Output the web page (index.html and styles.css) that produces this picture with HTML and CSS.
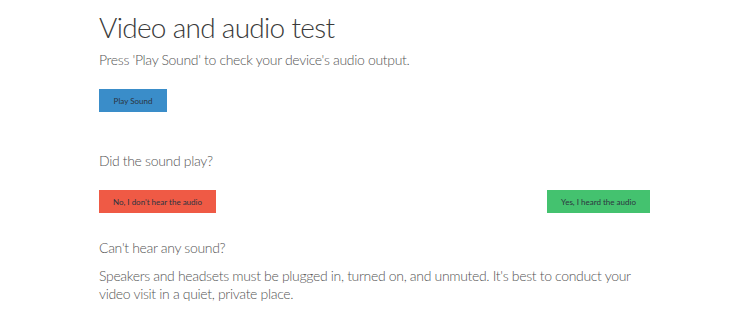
FILE: index.html
```html
<!DOCTYPE html>
<html>

<head>
    <title>Video and audio test</title>
    <meta charset="utf-8">
    <meta name="viewport" content="width=device-width, initial-scale=1.0">
    <link rel="stylesheet" href="styles.css">
</head>

<body>
    <main class="test">
        <h1>Video and audio test</h1>
        <p class="intro">Press 'Play Sound' to check your device's audio output.</p>

        <button class="knap play">Play Sound</button>

        <p class="sporg">Did the sound play?</p>
        <div class="svar">
            <button class="knap nej">No, I don't hear the audio</button>
            <button class="knap ja">Yes, I heard the audio</button>
        </div>

        <p class="hjaelp">Can't hear any sound?</p>
        <p class="tekst">Speakers and headsets must be plugged in, turned on, and unmuted. It's best to conduct your video visit in a quiet, private place.</p>
    </main>
</body>

</html>
```

FILE: styles.css
```css
body {
    margin: 0;
    font-family: Lato, "Open Sans", sans-serif;
    font-weight: 300;
    color: #555;
    letter-spacing: -0.33px;
}

.test {
    width: 551px;
    margin-left: 99px;
}

h1 {
    font-size: 28px;
    font-weight: 300;
    color: #3a3a3a;
    margin: 10px 0 0 0;
    line-height: 34px;
    letter-spacing: -0.7px;
}

.intro {
    font-size: 14px;
    margin: 7px 0 0 0;
    line-height: 18px;
}

.knap {
    border: none;
    font-family: Lato, sans-serif;
    font-weight: 400;
    font-size: 8px;
    letter-spacing: 0;
    height: 23px;
    padding: 0;
    color: #2c3440;
    cursor: pointer;
}

.play {
    background-color: #3a8dc9;
    width: 68px;
    margin-top: 20px;
    display: block;
}

.sporg {
    font-size: 14px;
    margin: 40px 0 0 0;
    line-height: 18px;
}

.svar {
    display: flex;
    justify-content: space-between;
    margin-top: 20px;
}

.nej {
    background-color: #ef5a45;
    width: 117px;
}

.ja {
    background-color: #44c26f;
    width: 103px;
}

.hjaelp {
    font-size: 14px;
    margin: 26px 0 0 0;
    line-height: 18px;
}

.tekst {
    font-size: 14px;
    margin: 10px 0 0 0;
    line-height: 18px;
}
```
